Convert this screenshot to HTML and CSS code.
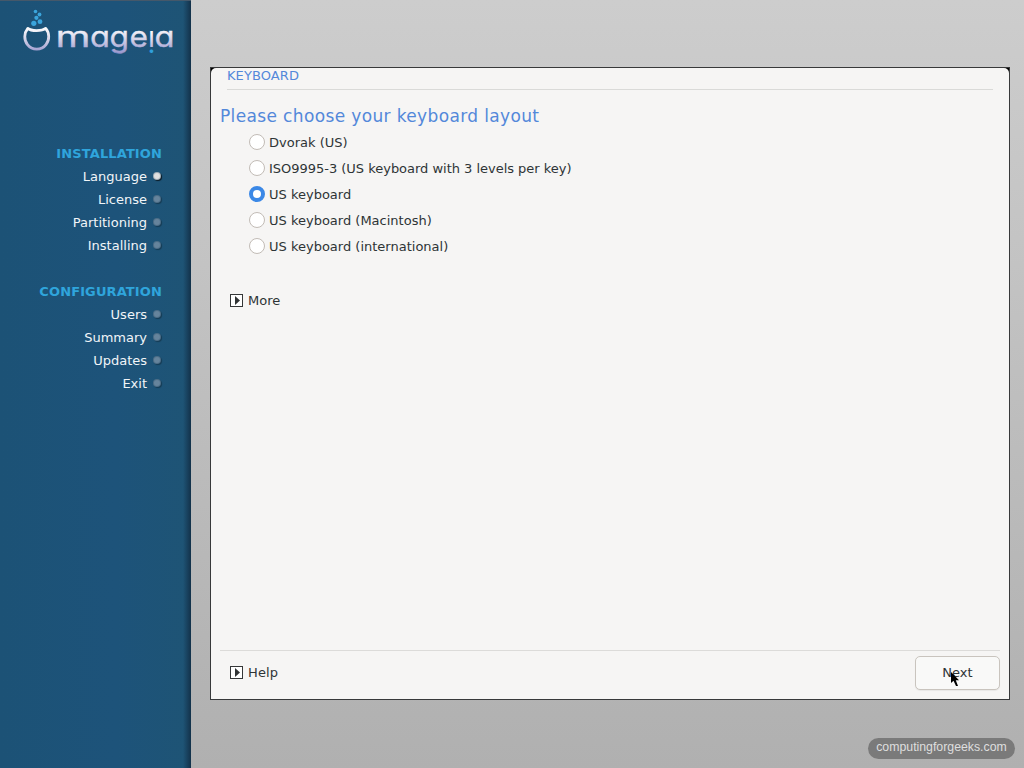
FILE: index.html
```
<!DOCTYPE html>
<html lang="en">
<head>
<meta charset="utf-8">
<title>Mageia installer - Keyboard</title>
<link rel="stylesheet" href="styles.css">
</head>
<body>
<aside class="sidebar">
  <svg class="logo" width="190" height="64" viewBox="0 0 190 64" role="img" aria-label="mageia">
    <defs>
      <linearGradient id="silver" gradientUnits="userSpaceOnUse" x1="0" y1="27" x2="0" y2="54">
        <stop offset="0" stop-color="#fff"/><stop offset=".35" stop-color="#dfdeed"/><stop offset="1" stop-color="#9592cb"/>
      </linearGradient>
      <linearGradient id="stem" gradientUnits="userSpaceOnUse" x1="0" y1="0" x2="0" y2="-21">
        <stop offset="0" stop-color="#fff"/><stop offset=".79" stop-color="#b9b7dc"/><stop offset=".8" stop-color="#2f9fdc"/>
      </linearGradient>
    </defs>
    <path d="M27.8 28.4C31 31.3 42 31.3 45.7 28.4C49.6 33 49.7 40 46 44.6C41.5 50.6 32 50.6 27.5 44.6C23.7 40 24 33 27.8 28.4Z" fill="none" stroke="url(#silver)" stroke-width="2.8" stroke-linejoin="round"/>
    <g fill="#3ba5dc">
      <circle cx="35.5" cy="11.5" r="1.8"/><circle cx="39.5" cy="14.5" r="1.9"/><circle cx="36.4" cy="17.8" r="2.1"/><circle cx="40" cy="21.7" r="2.4"/><circle cx="33.8" cy="23.3" r="2.6"/>
    </g>
    <g class="wordmark" fill="url(#silver)" stroke="url(#silver)">
      <text x="55.5" y="47" textLength="35" lengthAdjust="spacingAndGlyphs">m</text>
      <text x="90" y="47" textLength="20" lengthAdjust="spacingAndGlyphs">a</text>
      <text x="109.5" y="47" textLength="19.5" lengthAdjust="spacingAndGlyphs">g</text>
      <text x="129.5" y="47" textLength="18.5" lengthAdjust="spacingAndGlyphs">e</text>
      <text transform="translate(155 31) rotate(180)" fill="url(#stem)" stroke="none">i</text>
      <text x="154.5" y="47" textLength="20" lengthAdjust="spacingAndGlyphs">a</text>
    </g>
  </svg>
  <nav class="steps">
    <section class="group">
      <h2 class="group-title">INSTALLATION</h2>
      <div class="step">Language<i class="dot dot-active"></i></div>
      <div class="step">License<i class="dot"></i></div>
      <div class="step">Partitioning<i class="dot"></i></div>
      <div class="step">Installing<i class="dot"></i></div>
    </section>
    <section class="group">
      <h2 class="group-title">CONFIGURATION</h2>
      <div class="step">Users<i class="dot"></i></div>
      <div class="step">Summary<i class="dot"></i></div>
      <div class="step">Updates<i class="dot"></i></div>
      <div class="step">Exit<i class="dot"></i></div>
    </section>
  </nav>
</aside>
<main class="stage">
  <div class="frame">
    <div class="panel">
      <header class="caption">KEYBOARD</header>
      <h1 class="title">Please choose your keyboard layout</h1>
      <div class="options">
        <div class="option"><span class="radio"></span><span class="label">Dvorak (US)</span></div>
        <div class="option"><span class="radio"></span><span class="label label-long">ISO9995-3 (US keyboard with 3 levels per key)</span></div>
        <div class="option"><span class="radio radio-on"></span><span class="label">US keyboard</span></div>
        <div class="option"><span class="radio"></span><span class="label">US keyboard (Macintosh)</span></div>
        <div class="option"><span class="radio"></span><span class="label">US keyboard (international)</span></div>
      </div>
      <div class="expander more"><svg width="13" height="13" viewBox="0 0 13 13"><rect x=".5" y=".5" width="12" height="12" fill="#fff" stroke="#353738"/><path d="M5 2V11L10 6.5Z" fill="#303334"/></svg><span class="label">More</span></div>
      <footer class="footer">
        <div class="expander"><svg width="13" height="13" viewBox="0 0 13 13"><rect x=".5" y=".5" width="12" height="12" fill="#fff" stroke="#353738"/><path d="M5 2V11L10 6.5Z" fill="#303334"/></svg><span class="label">Help</span></div>
        <div class="next">Next
          <svg class="pointer" width="10" height="16" viewBox="0 0 10 16"><path d="M0 0V11L2.5 8.7L5 14H7L4.8 8.3H8Z" fill="#000"/></svg>
        </div>
      </footer>
    </div>
  </div>
  <div class="badge">computingforgeeks.com</div>
</main>
</body>
</html>
```

FILE: styles.css
```
* { box-sizing: border-box; }
body {
  margin: 0;
  width: 1024px;
  height: 768px;
  display: flex;
  overflow: hidden;
  font: 13px/20px "DejaVu Sans", sans-serif;
  color: #2e3436;
}
.sidebar {
  width: 191px;
  height: 768px;
  border-top: 1px solid #45586a;
  background:
    linear-gradient(90deg, transparent 183px, #163a55 189px, #123149 191px),
    linear-gradient(90deg, #1c5276, #1d537a 60%, #1e5475);
}
.logo { display: block; margin-top: -1px; }
.wordmark {
  font-family: Inter, sans-serif;
  font-size: 29px;
  font-weight: 400;
  font-feature-settings: "cv11";
  stroke-width: .3px;
}
.steps {
  width: 162px;
  padding-top: 78px;
  display: flex;
  flex-direction: column;
  gap: 23px;
}
.group { text-align: right; }
.group-title {
  margin: 0;
  height: 23px;
  font-size: 13px;
  line-height: 23px;
  font-weight: bold;
  letter-spacing: .12px;
  color: #2fa5dc;
}
.step {
  height: 23px;
  line-height: 23px;
  padding-right: 1px;
  display: flex;
  justify-content: flex-end;
  align-items: center;
  gap: 6px;
  color: #f1f5f8;
}
.dot {
  width: 8px;
  height: 8px;
  margin-top: -2px;
  border: 1px solid rgba(20, 60, 90, .3);
  border-radius: 50%;
  background: #66849c;
  box-shadow: 1px 1px 1px rgba(0, 0, 0, .3);
}
.dot-active { background: #e0e0e0; box-shadow: 1px 1px 1px rgba(0, 0, 0, .7); }
.stage {
  flex: 1;
  display: flex;
  flex-direction: column;
  padding: 67px 9px 0 19px;
  align-items: flex-end;
  background: linear-gradient(#cdcdcd, #b0b0b0);
}
.frame {
  width: 800px;
  height: 633px;
  margin-right: 5px;
  border: 1px solid #38393a;
  background: #000;
}
.panel {
  height: 631px;
  display: flex;
  flex-direction: column;
  padding: 0 9px 9px;
  border-radius: 5px 5px 0 0;
  background: #f6f5f4;
}
.caption {
  height: 22px;
  margin: 0 7px;
  padding-bottom: 4px;
  line-height: 16px;
  letter-spacing: .1px;
  border-bottom: 1px solid #dadad8;
  color: #5388da;
}
.title {
  margin: 14px 0 0;
  height: 25px;
  font-size: 17px;
  line-height: 24px;
  font-weight: normal;
  letter-spacing: .36px;
  color: #5388da;
}
.options { padding-left: 29px; }
.option {
  height: 26px;
  display: flex;
  align-items: center;
  gap: 4px;
}
.label { padding-top: 1px; }
.label-long { letter-spacing: -.02px; }
.radio {
  width: 16px;
  height: 16px;
  border: 1px solid #c2bcb6;
  border-radius: 50%;
  background: #fff;
}
.radio-on { border: 4px solid #3b88e6; }
.expander {
  display: flex;
  align-items: center;
  gap: 5px;
  padding-left: 10px;
}
.more { margin-top: 31px; }
.footer {
  margin-top: auto;
  height: 40px;
  padding-top: 5px;
  display: flex;
  justify-content: space-between;
  border-top: 1px solid #dcdbd9;
}
.footer .expander { padding-bottom: 1px; }
.footer .label { padding-top: 0; letter-spacing: .1px; }
.next {
  position: relative;
  width: 85px;
  height: 34px;
  line-height: 31px;
  text-align: center;
  border: 1px solid #c9c4be;
  border-radius: 5px;
  background: #f9f9f8;
  box-shadow: 0 1px 1px rgba(0, 0, 0, .06);
}
.pointer { position: absolute; left: 35px; top: 15px; }
.badge {
  width: 147px;
  height: 21px;
  margin-top: 38px;
  border-radius: 11px;
  background: #7a7a7a;
  color: #dedede;
  font: 12.3px/19px "Liberation Sans", sans-serif;
  text-align: center;
}
```
